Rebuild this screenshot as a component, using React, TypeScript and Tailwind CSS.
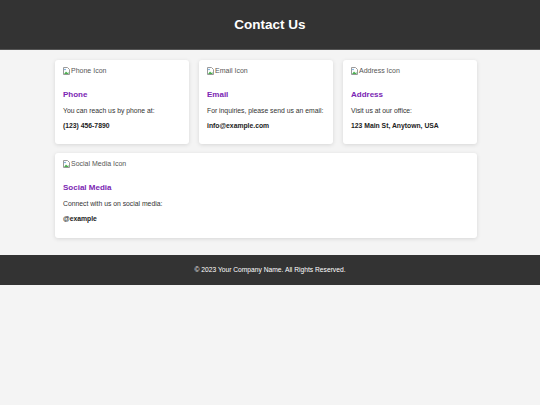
import React from 'react';

const BrokenImage = ({ alt }: { alt: string }) => (
  <div className="flex items-end gap-[1px] h-[8px] text-[7px] leading-[8px] text-[#555]">
    <svg width="7" height="8" viewBox="0 0 7 8" className="shrink-0">
      <path d="M0.5 0.5h4l2 2v5h-6z" fill="#fff" stroke="#9a9a9a" strokeWidth="1" />
      <path d="M1 7l2-2.5 1.5 1.5 1-1V7z" fill="#4caf50" />
      <circle cx="2" cy="2.5" r="0.8" fill="#5b9bd5" />
    </svg>
    <span>{alt}</span>
  </div>
);

type Item = { icon: string; title: string; text: string; value: string };

const items: Item[] = [
  { icon: 'Phone Icon', title: 'Phone', text: 'You can reach us by phone at:', value: '(123) 456-7890' },
  { icon: 'Email Icon', title: 'Email', text: 'For inquiries, please send us an email:', value: 'info@example.com' },
  { icon: 'Address Icon', title: 'Address', text: 'Visit us at our office:', value: '123 Main St, Anytown, USA' },
];

const social: Item = {
  icon: 'Social Media Icon',
  title: 'Social Media',
  text: 'Connect with us on social media:',
  value: '@example',
};

const Card = ({ item, className }: { item: Item; className?: string }) => (
  <div className={`bg-white rounded-[3px] shadow-[0_1px_4px_rgba(0,0,0,0.12)] px-2 pt-[7px] ${className ?? 'pb-[13px]'}`}>
    <BrokenImage alt={item.icon} />
    <h3 className="mt-[15px] text-[8px] leading-[10px] font-bold text-[#7b25b3]">{item.title}</h3>
    <p className="mt-[6px] text-[6.8px] leading-[10px] text-[#333] whitespace-nowrap">{item.text}</p>
    <p className="mt-[5px] text-[6.8px] leading-[10px] font-bold text-[#222]">{item.value}</p>
  </div>
);

export default function App() {
  return (
    <div className="min-h-[405px] bg-[#f4f4f4] font-['Liberation_Sans',Arial,sans-serif]">
      <header className="h-[50px] pt-[2px] bg-[#333] border-b border-[#555] flex items-center justify-center">
        <h1 className="text-white text-[13.5px] font-bold">Contact Us</h1>
      </header>
      <main className="ml-[55px] w-[422px] pt-[10px] pb-[17px]">
        <div className="grid grid-cols-3 gap-[10px]">
          {items.map((item) => (
            <Card key={item.title} item={item} />
          ))}
        </div>
        <Card item={social} className="mt-[9px] pb-[14px]" />
      </main>
      <footer className="h-[30px] bg-[#333] flex items-center justify-center">
        <p className="text-white text-[6.7px]">© 2023 Your Company Name. All Rights Reserved.</p>
      </footer>
    </div>
  );
}
